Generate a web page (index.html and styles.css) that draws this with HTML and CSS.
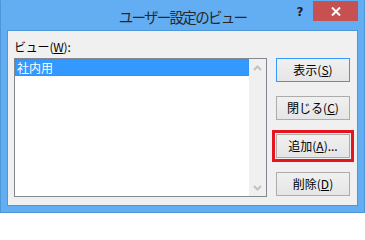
FILE: index.html
```
<!DOCTYPE html>
<html lang="ja">
<head>
<meta charset="utf-8">
<link rel="stylesheet" href="styles.css">
</head>
<body>
<div class="window">
  <div class="titlebar">
    <div class="spacer"></div>
    <div class="title">ユーザー設定のビュー</div>
    <div class="controls">
      <div class="help">?</div>
      <div class="close"><svg width="10" height="9" viewBox="0 0 10 9"><path d="M1 0.5 L9 8.5 M9 0.5 L1 8.5" stroke="#ffffff" stroke-width="2" fill="none"/></svg></div>
    </div>
  </div>
  <div class="client">
    <div class="left">
      <div class="label">ビュー(<u>W</u>):</div>
      <div class="listbox">
        <div class="items">
          <div class="item selected">社内用</div>
        </div>
        <div class="scrollbar">
          <div class="arrow"><svg width="9" height="6" viewBox="0 0 9 6"><path d="M1 5 L4.5 1.5 L8 5" stroke="#c2c2c2" stroke-width="2" fill="none"/></svg></div>
          <div class="arrow"><svg width="9" height="6" viewBox="0 0 9 6"><path d="M1 1 L4.5 4.5 L8 1" stroke="#c2c2c2" stroke-width="2" fill="none"/></svg></div>
        </div>
      </div>
    </div>
    <div class="buttons">
      <div class="btn default">表示(<u>S</u>)</div>
      <div class="btn">閉じる(<u>C</u>)</div>
      <div class="btn marked">追加(<u>A</u>)...</div>
      <div class="btn">削除(<u>D</u>)</div>
    </div>
  </div>
</div>
</body>
</html>
```

FILE: styles.css
```
html, body {
  margin: 0;
  padding: 0;
}
body {
  width: 365px;
  height: 213px;
  overflow: hidden;
  font-family: "Noto Sans CJK JP", "Noto Sans", sans-serif;
}
.window {
  box-sizing: border-box;
  width: 365px;
  height: 213px;
  background: #63aef3;
  border: 1px solid #4f96d8;
  border-top-color: #63aef3;
  padding: 0 6px 6px 6px;
  display: flex;
  flex-direction: column;
}
.titlebar {
  height: 29px;
  flex: none;
  display: grid;
  grid-template-columns: 1fr auto 1fr;
  align-items: start;
}
.title {
  font-size: 14.5px;
  letter-spacing: -1.7px;
  line-height: 29px;
  padding-top: 1px;
  color: #262626;
  white-space: nowrap;
}
.controls {
  justify-self: end;
  display: flex;
}
.help {
  width: 26px;
  height: 20px;
  font-family: "DejaVu Sans", sans-serif;
  font-weight: bold;
  font-size: 12px;
  line-height: 22px;
  text-align: center;
  color: #1e1e1e;
}
.close {
  width: 45px;
  height: 20px;
  background: #c75050;
  display: flex;
  align-items: center;
  justify-content: center;
}
.client {
  flex: 1;
  box-sizing: border-box;
  background: #f0f0f0;
  border: 1px solid #4f96d8;
  display: flex;
  padding: 0 6px 0 6px;
}
.left {
  display: flex;
  flex-direction: column;
}
.label {
  margin-top: 8px;
  font-size: 12px;
  line-height: 16px;
  letter-spacing: -0.2px;
  color: #000;
}
.listbox {
  margin-top: 3px;
  box-sizing: border-box;
  width: 253px;
  height: 139px;
  border: 1px solid #828790;
  background: #ffffff;
  display: flex;
}
.items {
  flex: 1;
}
.item {
  box-sizing: border-box;
  height: 17px;
  font-size: 12px;
  line-height: 15px;
  padding-left: 1px;
  color: #000;
}
.item.selected {
  background: #3399ff;
  color: #ffffff;
  border: 1px dotted #c86a10;
}
.scrollbar {
  width: 17px;
  background: #f0f0f0;
  display: flex;
  flex-direction: column;
  justify-content: space-between;
}
.arrow {
  height: 17px;
  display: flex;
  align-items: center;
  justify-content: center;
}
.buttons {
  margin-left: 9px;
  padding-top: 27px;
  display: flex;
  flex-direction: column;
  gap: 14px;
}
.btn {
  box-sizing: border-box;
  width: 74px;
  height: 24px;
  border: 1px solid #acacac;
  background: linear-gradient(#f0f0f0, #e5e5e5);
  font-size: 12px;
  line-height: 21px;
  text-align: center;
  color: #000;
}
.btn.default {
  border-color: #3399ff;
}
.btn.marked {
  outline: 3px solid #e51520;
  outline-offset: 1px;
}
```
